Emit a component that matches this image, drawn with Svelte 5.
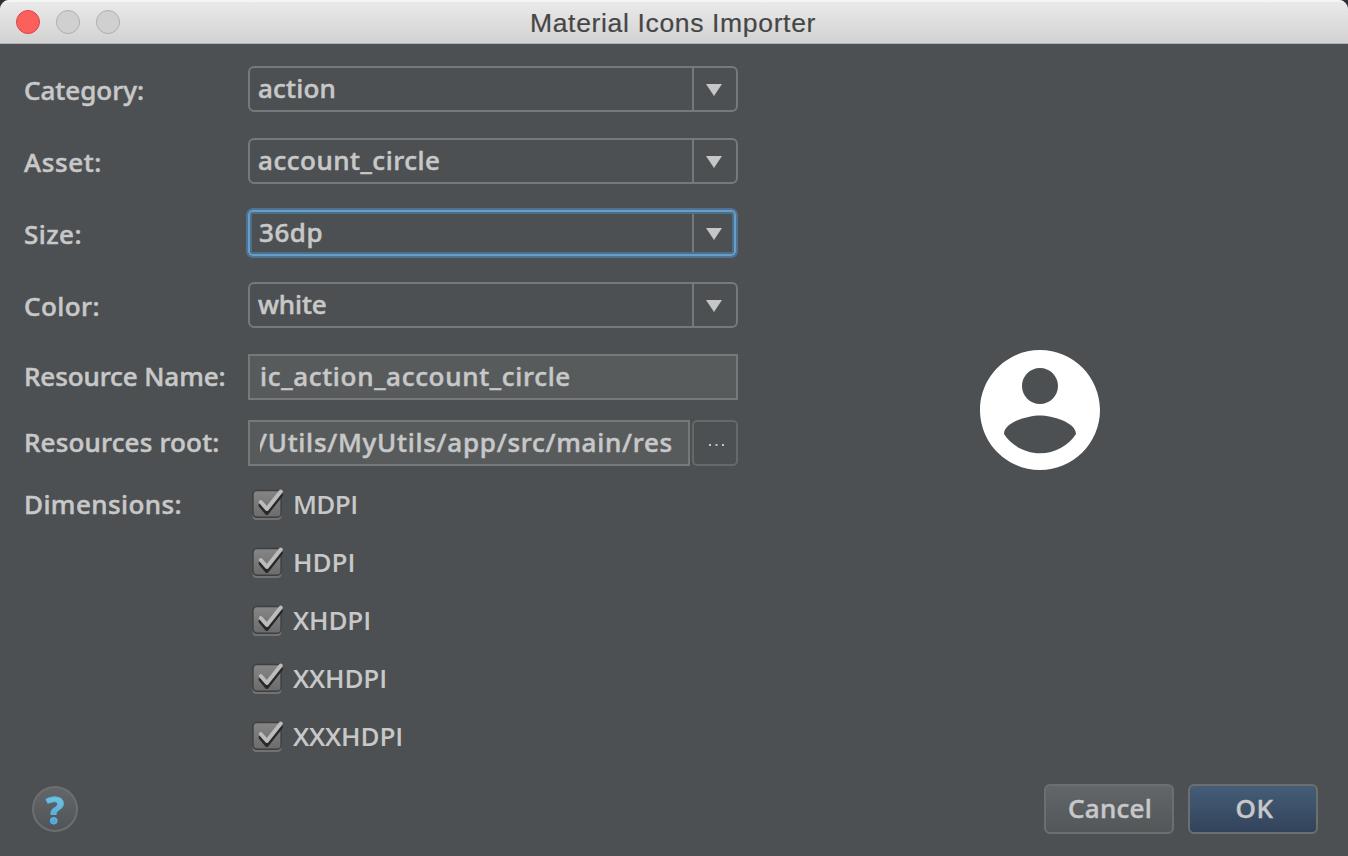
<script>
  const combos = [
    { label: 'Category:', lw: 120, value: 'action', vw: 78 },
    { label: 'Asset:', lw: 78, value: 'account_circle', vw: 182.5 },
    { label: 'Size:', lw: 58, value: '36dp', vw: 64, focused: true },
    { label: 'Color:', lw: 76, value: 'white', vw: 68.5 }
  ];
  const densities = [
    { name: 'MDPI', w: 64.5 },
    { name: 'HDPI', w: 62.5 },
    { name: 'XHDPI', w: 78 },
    { name: 'XXHDPI', w: 94 },
    { name: 'XXXHDPI', w: 110 }
  ];

  // Spreads the letters evenly so that the text takes the given width.
  function fit(node, width) {
    const natural = node.getBoundingClientRect().width;
    node.style.letterSpacing = (width - natural) / node.textContent.length + 'px';
  }
</script>

<div class="desktop">
  <div class="window">
    <header>
      <span class="light close"></span>
      <span class="light"></span>
      <span class="light"></span>
      <h1><span use:fit={286}>Material Icons Importer</span></h1>
    </header>

    <main>
      <div class="form">
        {#each combos as c}
          <div class="row">
            <div class="label low"><span use:fit={c.lw}>{c.label}</span></div>
            <div class="combo" class:focused={c.focused}>
              <div class="value"><span use:fit={c.vw}>{c.value}</span></div>
              <div class="arrow">
                <svg width="16" height="12" viewBox="0 0 16 12"><path d="M0 0H16L8 12Z" fill="#c6c6c6" /></svg>
              </div>
            </div>
          </div>
        {/each}

        <div class="row name">
          <div class="label"><span use:fit={201.5}>Resource Name:</span></div>
          <div class="field"><span use:fit={311}>ic_action_account_circle</span></div>
        </div>

        <div class="row root">
          <div class="label"><span use:fit={195.5}>Resources root:</span></div>
          <div class="field short"><div class="clip"><span use:fit={416}>/Utils/MyUtils/app/src/main/res</span></div></div>
          <button class="browse" aria-label="Browse">
            <svg width="16" height="2" viewBox="0 0 16 2"><path d="M0 0h2v2H0zM6.5 0h2v2h-2zM13 0h2v2h-2z" fill="#c4c4c4" /></svg>
          </button>
        </div>

        <div class="row dims">
          <div class="label"><span use:fit={158}>Dimensions:</span></div>
          <div class="checks">
            {#each densities as d}
              <div class="check">
                <svg width="34" height="36" viewBox="0 0 34 36">
                  <defs>
                    <linearGradient id="box" x1="0" y1="0" x2="0" y2="1">
                      <stop offset="0" stop-color="#868686" />
                      <stop offset="1" stop-color="#6b6b6b" />
                    </linearGradient>
                  </defs>
                  <rect x="0.5" y="5" width="29" height="28" rx="4" fill="#707273" />
                  <rect x="0.9" y="3.6" width="28.2" height="26.6" rx="4" fill="url(#box)" stroke="#3d3f40" stroke-width="1.5" />
                  <path d="M8.6 18.4L14.8 26L29 8" fill="none" stroke="#282828" stroke-width="4" stroke-linejoin="round" stroke-linecap="round" />
                  <path d="M8.8 15L14.9 22L28.8 4.6" fill="none" stroke="#bcbcbc" stroke-width="4" stroke-linejoin="round" stroke-linecap="round" />
                </svg>
                <span use:fit={d.w}>{d.name}</span>
              </div>
            {/each}
          </div>
        </div>
      </div>

      <div class="preview">
        <svg width="144" height="144" viewBox="0 0 24 24">
          <path fill="#fff" d="M12 2C6.48 2 2 6.48 2 12s4.48 10 10 10 10-4.48 10-10S17.52 2 12 2zm0 3c1.66 0 3 1.34 3 3s-1.34 3-3 3-3-1.34-3-3 1.34-3 3-3zm0 14.2c-2.5 0-4.71-1.28-6-3.22.03-1.99 4-3.08 6-3.08 1.99 0 5.97 1.09 6 3.08-1.29 1.94-3.5 3.22-6 3.22z" />
        </svg>
      </div>
    </main>

    <footer>
      <button class="help"><span>?</span></button>
      <button class="btn"><span use:fit={84}>Cancel</span></button>
      <button class="btn ok"><span use:fit={38}>OK</span></button>
    </footer>
  </div>
</div>

<style>
  :global(body) {
    margin: 0;
    background: #302e33;
  }
  .desktop {
    width: 1348px;
    height: 856px;
    overflow: hidden;
    background: #302e33;
  }
  .window {
    box-sizing: border-box;
    height: 856px;
    display: flex;
    flex-direction: column;
    border-radius: 9px 9px 0 0;
    overflow: hidden;
    background: #4c5052;
    color: #c8c8c8;
    font: 500 26px/46px 'Noto Sans', sans-serif;
    -webkit-text-stroke: 0.5px currentColor;
  }
  span {
    white-space: pre;
  }
  header {
    box-sizing: border-box;
    height: 44px;
    flex: none;
    display: flex;
    gap: 16px;
    padding: 10px 16px 0;
    background: linear-gradient(#ebebeb, #d2d2d2);
    border-bottom: 1px solid #b0b2b3;
    box-shadow: inset 0 2px #f5f5f5;
  }
  .light {
    box-sizing: border-box;
    width: 24px;
    height: 24px;
    border-radius: 50%;
    background: #d0d0d0;
    border: 1px solid #aeaeae;
  }
  .close {
    background: #fc605c;
    border-color: #dc4643;
  }
  h1 {
    margin: 0 0 0 394px;
    font: 400 26.5px/26px 'Liberation Sans', sans-serif;
    color: #464646;
    -webkit-text-stroke: 0.2px currentColor;
  }
  main {
    flex: none;
    height: 740px;
    display: flex;
  }
  .form {
    width: 738px;
    padding-top: 22px;
    display: flex;
    flex-direction: column;
    gap: 26px;
  }
  .row {
    display: flex;
    height: 46px;
  }
  .label {
    width: 224px;
    margin-left: 24px;
    flex: none;
    position: relative;
    top: -1px;
  }
  .label.low {
    top: 1px;
  }
  .combo {
    box-sizing: border-box;
    width: 490px;
    height: 46px;
    display: flex;
    border: 2px solid #767879;
    border-radius: 6px;
  }
  .value {
    flex: 1;
    padding-left: 8px;
    line-height: 40px;
  }
  .arrow {
    width: 42px;
    border-left: 2px solid #767879;
    display: flex;
  }
  .arrow svg {
    margin: 16px 0 0 12px;
  }
  .combo.focused {
    width: 488px;
    border-color: #689fca;
    border-radius: 5px;
    box-shadow:
      0 0 0 2px #517391,
      inset 0 0 0 2px #4d6f8a;
  }
  .focused .value {
    padding-left: 9px;
  }
  .focused .arrow {
    width: 40px;
    margin: 2px 0;
  }
  .focused .arrow svg {
    margin-top: 14px;
  }
  .root {
    margin-top: -6px;
  }
  .field {
    box-sizing: border-box;
    width: 490px;
    border: 2px solid #777979;
    background: #585b5c;
    padding: 0 10px;
    line-height: 40px;
  }
  .short {
    width: 442px;
    padding-right: 15px;
  }
  .clip {
    display: flex;
    justify-content: flex-end;
    overflow: hidden;
  }
  button {
    box-sizing: border-box;
    padding: 0;
    font: inherit;
    color: inherit;
    text-align: center;
  }
  .browse {
    width: 46px;
    margin-left: 2px;
    border: 2px solid #66696a;
    border-radius: 5px;
    background: #4c5052;
    display: flex;
    justify-content: center;
    padding: 22px 0 0 4px;
  }
  .dims {
    margin-top: -11px;
    height: auto;
  }
  .dims .label {
    top: 0;
  }
  .checks {
    display: flex;
    flex-direction: column;
    gap: 12px;
    padding-left: 4px;
  }
  .check {
    display: flex;
    height: 46px;
    gap: 7px;
    font-family: 'Open Sans', sans-serif;
    font-weight: 600;
    -webkit-text-stroke: 0;
  }
  .check svg {
    margin-top: 6px;
  }
  .preview {
    flex: 1;
    padding: 294px 0 0 230px;
  }
  footer {
    display: flex;
    flex: none;
    gap: 14px;
    padding: 0 30px 0 32px;
  }
  .help {
    width: 46px;
    height: 46px;
    margin: 2px auto 0 0;
    border-radius: 50%;
    border: 2px solid #6d6e6f;
    background: linear-gradient(#626668, #515557);
    font: 700 38px/40px 'Open Sans', sans-serif;
    -webkit-text-stroke: 0.8px #5db5dd;
  }
  .help span {
    color: transparent;
    background: linear-gradient(#6bc3df 30%, #4c9fdc 85%);
    -webkit-background-clip: text;
    background-clip: text;
  }
  .btn {
    width: 130px;
    height: 50px;
    border: 2px solid #6c6f70;
    border-radius: 6px;
    background: linear-gradient(#626668, #53575a);
    line-height: 44px;
    padding: 0 0 2px 2px;
  }
  .ok {
    background: linear-gradient(#455d78, #32435a);
    padding-left: 3px;
  }
</style>
